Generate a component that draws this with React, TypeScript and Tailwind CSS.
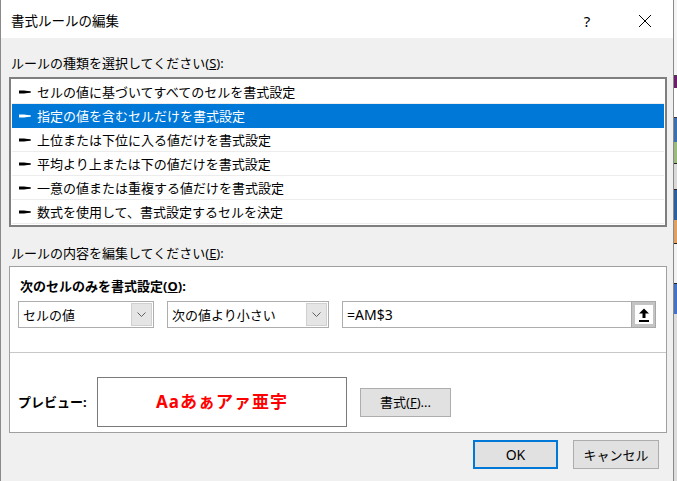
import React from 'react';

const RULES = [
  'セルの値に基づいてすべてのセルを書式設定',
  '指定の値を含むセルだけを書式設定',
  '上位または下位に入る値だけを書式設定',
  '平均より上または下の値だけを書式設定',
  '一意の値または重複する値だけを書式設定',
  '数式を使用して、書式設定するセルを決定',
];

const FONT = { fontFamily: '"Noto Sans", "Noto Sans CJK JP", sans-serif' };

function Pointer({ color }: { color: string }) {
  return (
    <svg width="12" height="8" viewBox="0 0 12 8" className="shrink-0">
      <polygon points="0,2.5 5,2.5 12,3.5 12,4.5 5,5.5 0,5.5" fill={color} />
      <rect x="5" y="3.5" width="6" height="1" fill={color} />
    </svg>
  );
}

function Chevron() {
  return (
    <svg width="9" height="6" viewBox="0 0 9 6">
      <polyline points="0.5,0.5 4.5,4.5 8.5,0.5" fill="none" stroke="#606060" strokeWidth="1" />
    </svg>
  );
}

function Select({ value, width }: { value: string; width: string }) {
  return (
    <div className={`${width} h-[27px] flex items-stretch border border-[#adadad] bg-white`}>
      <div className="flex-1 flex items-center pl-[4px] text-[13px] leading-[18px] text-black">{value}</div>
      <div className="w-[21px] m-px flex items-center justify-center bg-[#e5e5e5] border border-[#d0d0d0]">
        <Chevron />
      </div>
    </div>
  );
}

export default function App() {
  return (
    <div className="w-[677px] h-[481px] flex bg-[#f0f0f0] overflow-hidden text-black" style={FONT}>
      <div className="w-[674px] h-full flex flex-col border-l border-r border-[#8a8a8a]">
        {/* Title bar */}
        <div className="h-[38px] shrink-0 bg-white flex items-center pt-[4px] pl-[10px]">
          <span className="text-[13.5px] leading-[18px]">書式ルールの編集</span>
          <span className="ml-auto w-[20px] text-center text-[15px] leading-[18px]">?</span>
          <svg width="14" height="14" viewBox="0 0 14 14" className="ml-[41px] mr-[21px]">
            <path d="M1 1 L13 13 M13 1 L1 13" stroke="#000" strokeWidth="1" />
          </svg>
        </div>

        {/* Rule type */}
        <div className="h-[39px] shrink-0 pt-[16px] pl-[10px] text-[13px] leading-[18px]">
          ルールの種類を選択してください(<span className="underline">S</span>):
        </div>
        <div className="ml-[8px] w-[658px] h-[150px] shrink-0 border-2 border-[#7f7f7f] bg-white p-px">
          {RULES.map((r, i) => {
            const sel = i === 1;
            return (
              <div
                key={r}
                className={`h-[24px] flex items-center gap-[6px] pl-[7px] border-b ${
                  sel ? 'bg-[#0078d7] text-white border-[#0078d7]' : 'border-[#ececec]'
                }`}
              >
                <Pointer color={sel ? '#ffffff' : '#000000'} />
                <span className="text-[13px] leading-[18px]">{r}</span>
              </div>
            );
          })}
        </div>

        {/* Rule description */}
        <div className="h-[39px] shrink-0 pt-[17px] pl-[10px] text-[13px] leading-[18px]">
          ルールの内容を編集してください(<span className="underline">E</span>):
        </div>
        <div className="ml-[8px] w-[658px] h-[167px] shrink-0 border border-[#a0a0a0] bg-white flex flex-col">
          <div className="pt-[10px] pl-[10px] text-[13px] leading-[18px] font-bold">
            次のセルのみを書式設定(<span className="underline">O</span>):
          </div>
          <div className="mt-[6px] ml-[8px] flex gap-[13px]">
            <Select value="セルの値" width="w-[136px]" />
            <Select value="次の値より小さい" width="w-[162px]" />
            <div className="w-[314px] h-[27px] flex items-stretch border border-[#adadad] bg-white">
              <div className="flex-1 flex items-center pl-[4px] text-[14px] leading-[18px]">=AM$3</div>
              <div className="w-[25px] -my-px -mr-px bg-[#c4c4c4] border border-[#a8a8a8] flex items-center justify-center">
                <div className="w-[18px] h-[19px] bg-white flex items-center justify-center">
                  <svg width="12" height="14" viewBox="0 0 12 14">
                    <polygon points="6,0.5 11,5.5 7.5,5.5 7.5,10 4.5,10 4.5,5.5 1,5.5" fill="#000" />
                    <rect x="1" y="12" width="10" height="2" fill="#000" />
                  </svg>
                </div>
              </div>
            </div>
          </div>
          <div className="mt-[24px] h-px bg-[#c8c8c8]" />
          <div className="mt-[24px] ml-[8px] flex items-center">
            <div className="w-[79px] text-[13px] leading-[18px] font-bold">プレビュー:</div>
            <div className="w-[250px] h-[50px] border border-[#7a7a7a] flex items-center justify-center">
              <span className="text-[17px] leading-[22px] font-bold text-[#ff0000] tracking-[1px]">
                Aaあぁアァ亜宇
              </span>
            </div>
            <div className="ml-[13px] w-[91px] h-[29px] bg-[#e1e1e1] border border-[#adadad] flex items-center justify-center text-[13px] leading-[18px]">
              書式(<span className="underline">F</span>)...
            </div>
          </div>
        </div>

        {/* Footer buttons */}
        <div className="mt-[7px] flex justify-end gap-[15px] pr-[14px]">
          <div className="w-[85px] h-[29px] bg-[#e1e1e1] border-2 border-[#0078d7] flex items-center justify-center text-[14px] leading-[18px]">
            OK
          </div>
          <div className="w-[86px] h-[29px] bg-[#e1e1e1] border border-[#adadad] flex items-center justify-center text-[13px] leading-[18px]">
            キャンセル
          </div>
        </div>
      </div>

      {/* Sliver of the worksheet behind the dialog */}
      <div className="flex-1 flex flex-col bg-[#e8e8e8]">
        <div className="h-[76px] bg-[#f4f4f4] border-b border-[#444]" />
        <div className="h-[12px] bg-[#6b1f6b]" />
        <div className="h-[30px] bg-[#ffffff] border-b border-[#333]" />
        <div className="h-[24px] bg-[#3a6fb0]" />
        <div className="h-[22px] bg-[#9bbb7c] border-b border-[#222]" />
        <div className="h-[26px] bg-[#d9d9d9] border-b border-[#222]" />
        <div className="h-[30px] bg-[#2c5f9e]" />
        <div className="h-[24px] bg-[#e0a060] border-b border-[#222]" />
        <div className="h-[40px] bg-[#f2f2f2] border-b border-[#222]" />
        <div className="h-[30px] bg-[#4472c4]" />
        <div className="flex-1 bg-[#dcdcdc]" />
      </div>
    </div>
  );
}
